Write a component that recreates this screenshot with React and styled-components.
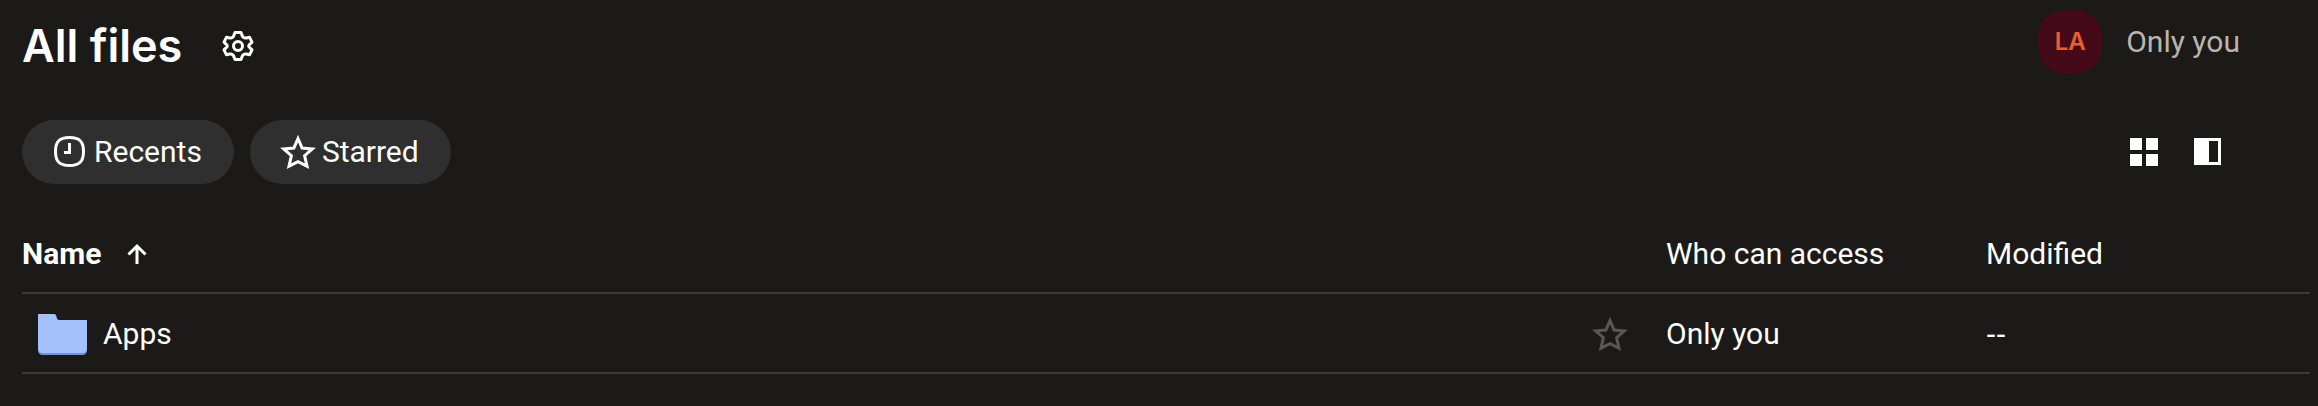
import React, { useState } from "react";
import styled, { createGlobalStyle } from "styled-components";

const files = [{ name: "Apps", access: "Only you", modified: null }];

function StarIcon() {
  return (
    <Icon viewBox="0 0 48 48" aria-hidden="true">
      <path
        d="M24 10.5 28.1 20.1 38.3 20.9 30.6 27.7 33 38.2 24 33.6 15 38.2 17.4 27.7 9.7 20.9 19.9 20.1Z"
        fill="none"
        stroke="currentColor"
        strokeWidth="3"
      />
    </Icon>
  );
}

function ClockIcon() {
  return (
    <Icon viewBox="0 0 48 48" aria-hidden="true">
      <g fill="none" stroke="currentColor" strokeWidth="3">
        <path d="M23.5 9.5C33.5 9.5 37.5 13.5 37.5 23.5S33.5 37.5 23.5 37.5 9.5 33.5 9.5 23.5 13.5 9.5 23.5 9.5Z" />
        <path d="M23.5 15V24.5H18" />
      </g>
    </Icon>
  );
}

function GearIcon() {
  return (
    <Icon viewBox="0 0 48 48" aria-hidden="true">
      <g fill="none" stroke="currentColor" strokeWidth="3" strokeLinejoin="round">
        <path d="M21 10.5H27L28.6 14.6Q30 16.3 32.2 15.9L35.6 15.3 38 20.1 35.1 23Q34.3 24 35.1 25L38 27.9 35.6 32.7 32.2 32.1Q30 31.7 28.6 33.4L27 37.5H21L19.4 33.4Q18 31.7 15.8 32.1L12.4 32.7 10 27.9 12.9 25Q13.7 24 12.9 23L10 20.1 12.4 15.3 15.8 15.9Q18 16.3 19.4 14.6Z" />
        <circle cx="24" cy="24" r="4.5" />
      </g>
    </Icon>
  );
}

function GridIcon() {
  return (
    <Icon viewBox="0 0 48 48" aria-hidden="true">
      <path
        d="M10 10H22V22H10ZM26 10H38V22H26ZM10 26H22V38H10ZM26 26H38V38H26Z"
        fill="currentColor"
      />
    </Icon>
  );
}

function PanelIcon() {
  return (
    <Icon viewBox="0 0 48 48" aria-hidden="true">
      <path
        d="M10 10H37V37H10ZM25 13V34H34V13Z"
        fill="currentColor"
        fillRule="evenodd"
      />
    </Icon>
  );
}

function ArrowUpIcon() {
  return (
    <SmallIcon viewBox="0 0 32 32" aria-hidden="true">
      <path
        d="M16 26V8M7.5 16.5 16 8 24.5 16.5"
        fill="none"
        stroke="currentColor"
        strokeWidth="3"
      />
    </SmallIcon>
  );
}

function FolderIcon() {
  return (
    <FolderSvg viewBox="0 0 49 41" aria-hidden="true">
      <path
        d="M0 1H16Q18 1 18.5 4 19 7 21 7H49V36Q49 41 44 41H5Q0 41 0 36Z"
        fill="#6f95dc"
      />
      <path
        d="M0 0H16Q18 0 18.5 3 19 6 21 6H49V34Q49 39 44 39H5Q0 39 0 34Z"
        fill="#a5c1fb"
      />
    </FolderSvg>
  );
}

function Avatar({ initials }) {
  return (
    <StyledAvatar>
      <svg viewBox="0 0 64 64" aria-hidden="true">
        <path
          d="M32 0C54 0 64 10 64 32S54 64 32 64 0 54 0 32 10 0 32 0Z"
          fill="#450a19"
        />
      </svg>
      <span>{initials}</span>
    </StyledAvatar>
  );
}

function App() {
  const [ascending, setAscending] = useState(true);
  const rows = ascending ? files : [...files].reverse();

  return (
    <>
      <GlobalStyle />
      <Page>
        <Header>
          <TitleGroup>
            <Title>All files</Title>
            <IconButton aria-label="Folder settings">
              <GearIcon />
            </IconButton>
          </TitleGroup>
          <Members>
            <Avatar initials="LA" />
            <span>Only you</span>
          </Members>
        </Header>
        <Toolbar>
          <Filters>
            <Pill>
              <ClockIcon />
              Recents
            </Pill>
            <Pill>
              <StarIcon />
              Starred
            </Pill>
          </Filters>
          <Views>
            <IconButton aria-label="Grid view">
              <GridIcon />
            </IconButton>
            <IconButton aria-label="Toggle details panel">
              <PanelIcon />
            </IconButton>
          </Views>
        </Toolbar>
        <Table>
          <thead>
            <tr>
              <HeadCell aria-sort={ascending ? "ascending" : "descending"}>
                <SortButton onClick={() => setAscending(!ascending)}>
                  Name
                  <ArrowUpIcon />
                </SortButton>
              </HeadCell>
              <HeadCell $width="320px">Who can access</HeadCell>
              <HeadCell $width="324px">Modified</HeadCell>
            </tr>
          </thead>
          <tbody>
            {rows.map((file) => (
              <tr key={file.name}>
                <Cell>
                  <NameCell>
                    <FolderIcon />
                    <FileLink href="#apps">{file.name}</FileLink>
                    <IconButton $muted aria-label={`Star ${file.name}`}>
                      <StarIcon />
                    </IconButton>
                  </NameCell>
                </Cell>
                <Cell>{file.access}</Cell>
                <Cell>{file.modified || <EmptyValue>--</EmptyValue>}</Cell>
              </tr>
            ))}
          </tbody>
        </Table>
      </Page>
    </>
  );
}

const GlobalStyle = createGlobalStyle`
  * {
    box-sizing: border-box;
  }

  body {
    margin: 0;
    background: #1b1a18;
    color: #fff;
    font-family: Roboto, "Liberation Sans", sans-serif;
    font-size: 30px;
    line-height: 40px;
  }

  button {
    border: 0;
    padding: 0;
    background: none;
    color: inherit;
    font: inherit;
    cursor: pointer;
  }
`;

const Page = styled.main`
  padding: 10px 8px 0 22px;
`;

const Header = styled.header`
  display: flex;
  align-items: flex-start;
  justify-content: space-between;
  padding-right: 70px;
`;

const TitleGroup = styled.div`
  display: flex;
  align-items: center;
  gap: 24px;
  padding-top: 4px;
`;

const Title = styled.h1`
  margin: 0;
  font-family: Inter, sans-serif;
  font-size: 45px;
  font-weight: 600;
  line-height: 64px;
`;

const Members = styled.div`
  display: flex;
  align-items: center;
  gap: 24px;
  color: #bbb5ae;
`;

const StyledAvatar = styled.div`
  display: grid;
  place-items: center;
  width: 64px;
  height: 64px;
  color: #e8602f;
  font-family: Inter, sans-serif;
  font-size: 24px;
  font-weight: 600;

  > * {
    grid-area: 1 / 1;
  }
`;

const Toolbar = styled.div`
  display: flex;
  align-items: center;
  justify-content: space-between;
  padding: 42px 70px 0 0;
`;

const Filters = styled.div`
  display: flex;
  gap: 16px;
`;

const Pill = styled.button`
  display: flex;
  align-items: center;
  height: 64px;
  && {
    padding: 0 32px 0 24px;
    background: #2f2f2f;
  }
  border-radius: 32px;
`;

const Views = styled.div`
  display: flex;
`;

const IconButton = styled.button`
  display: grid;
  place-items: center;
  width: 64px;
  height: 64px;
  && {
    color: ${(props) => (props.$muted ? "#5c5650" : "#fff")};
  }
`;

const Icon = styled.svg`
  flex: none;
  width: 48px;
  height: 48px;
`;

const SmallIcon = styled.svg`
  width: 32px;
  height: 32px;
`;

const FolderSvg = styled.svg`
  flex: none;
  width: 49px;
  height: 41px;
`;

const Table = styled.table`
  width: 100%;
  margin-top: 30px;
  border-collapse: separate;
  border-spacing: 0;
`;

const HeadCell = styled.th`
  width: ${(props) => props.$width || "auto"};
  height: 80px;
  padding: 2px 0 0;
  border-bottom: 2px solid #3c3a39;
  font-weight: 400;
  text-align: left;
`;

const SortButton = styled.button`
  display: flex;
  align-items: center;
  gap: 20px;
  && {
    font-weight: 700;
  }
`;

const Cell = styled.td`
  height: 80px;
  padding: 2px 0 0;
  border-bottom: 2px solid #3c3a39;
`;

const NameCell = styled.div`
  display: flex;
  align-items: center;
  padding: 0 24px 0 16px;
`;

const FileLink = styled.a`
  flex: 1;
  padding-left: 16px;
  color: inherit;
  text-decoration: none;
`;

const EmptyValue = styled.span`
  font-family: "Liberation Sans", sans-serif;
`;

export default App;
